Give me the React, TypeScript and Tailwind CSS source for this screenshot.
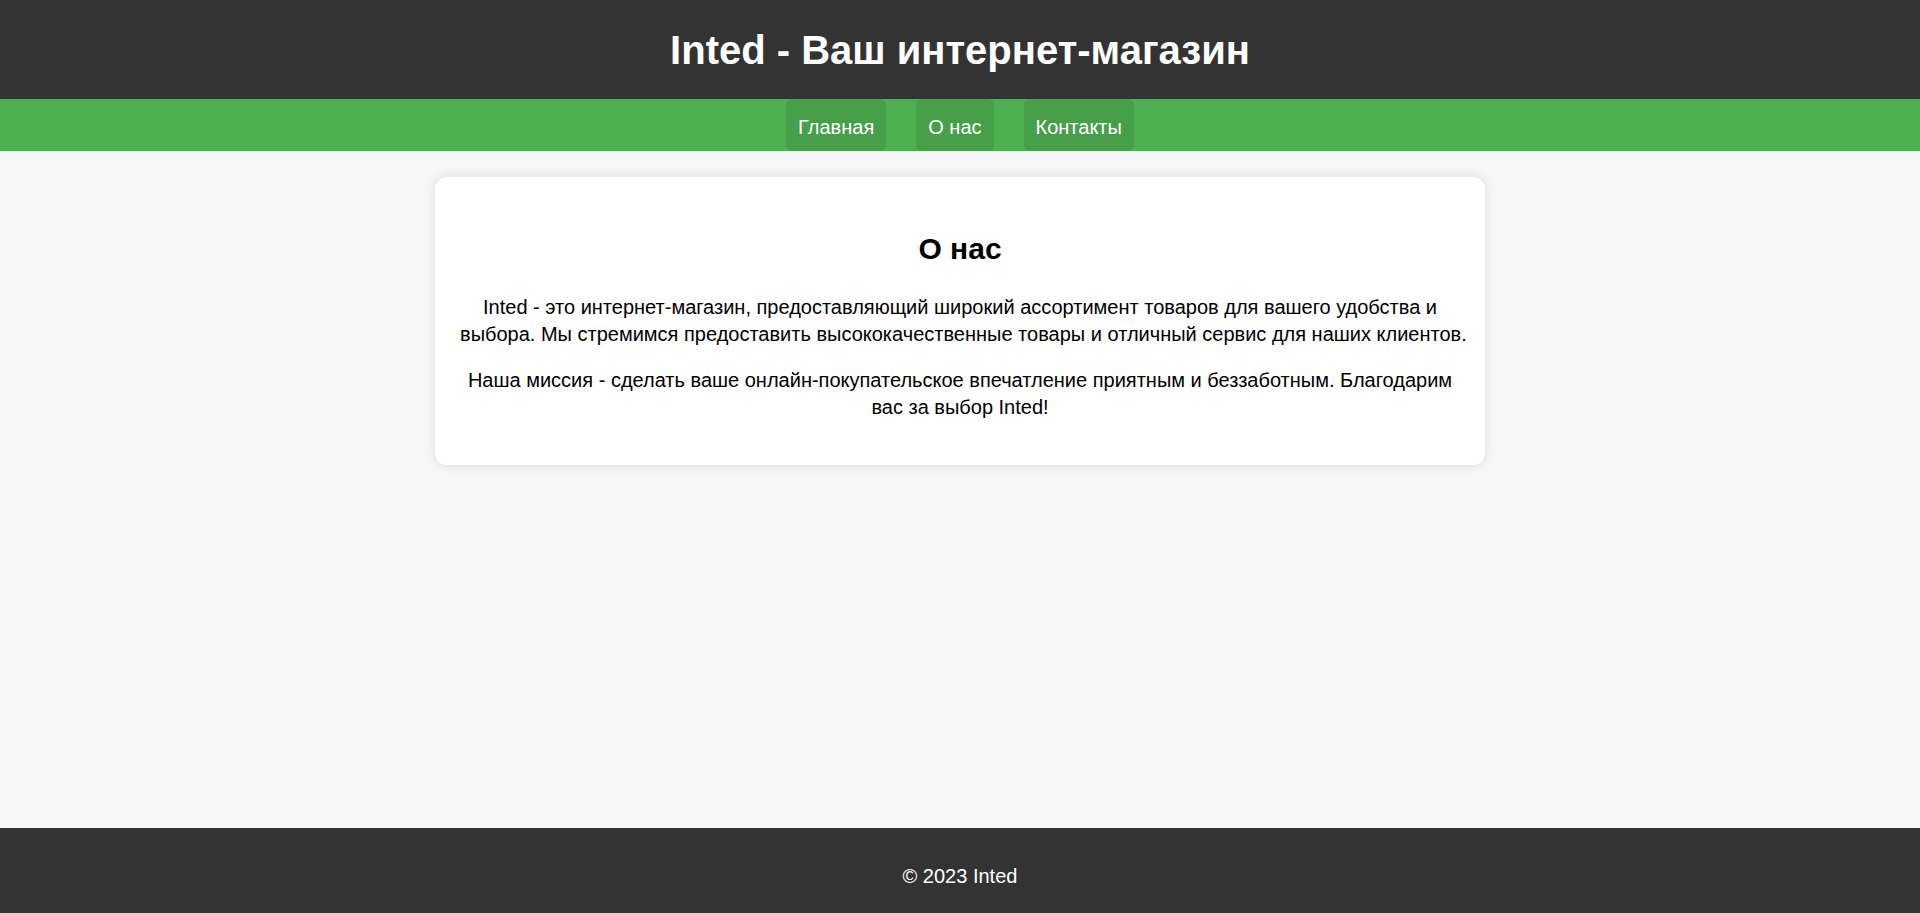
export default function App() {
    const links = ["Главная", "О нас", "Контакты"];

    return (
        <div className="min-h-screen flex flex-col bg-[#f7f7f7] font-['Liberation_Sans',Arial,sans-serif]">
            {/* Header */}
            <header className="h-[99px] bg-[#333333] text-white text-center shrink-0">
                <h1 className="pt-[24px] text-[40px] leading-[53px] font-bold">Inted - Ваш интернет-магазин</h1>
            </header>

            {/* Navigation */}
            <nav className="h-[52px] bg-[#4caf50] flex justify-center gap-[30px] shrink-0">
                {links.map((l) => (
                    <a
                        key={l}
                        href="#"
                        className="h-full block pt-[15px] px-[12px] rounded-[6px] bg-[#45a049] text-white text-[20px] leading-[27px]"
                    >
                        {l}
                    </a>
                ))}
            </nav>

            {/* Content */}
            <main className="flex-1 pt-[26px]">
                <section className="mx-auto w-[1050px] px-[25px] pt-[27px] pb-[23px] bg-white rounded-[12px] shadow-[0_0_12px_rgba(0,0,0,0.12)] text-center text-black">
                    <h2 className="mt-[25px] mb-[25px] text-[30px] leading-[40px] font-bold">О нас</h2>
                    <p className="text-[20px] leading-[26.7px] mb-[20px] whitespace-nowrap">
                        Inted - это интернет-магазин, предоставляющий широкий ассортимент товаров для вашего удобства и
                        <br />
                        выбора. Мы стремимся предоставить высококачественные товары и отличный сервис для наших клиентов.
                    </p>
                    <p className="text-[20px] leading-[26.7px] mb-[21px] whitespace-nowrap">
                        Наша миссия - сделать ваше онлайн-покупательское впечатление приятным и беззаботным. Благодарим
                        <br />
                        вас за выбор Inted!
                    </p>
                </section>
            </main>

            {/* Footer */}
            <footer className="h-[85px] bg-[#333333] text-white text-center pt-[35px] shrink-0">
                <p className="text-[20px] leading-[27px]">© 2023 Inted</p>
            </footer>
        </div>
    );
}
